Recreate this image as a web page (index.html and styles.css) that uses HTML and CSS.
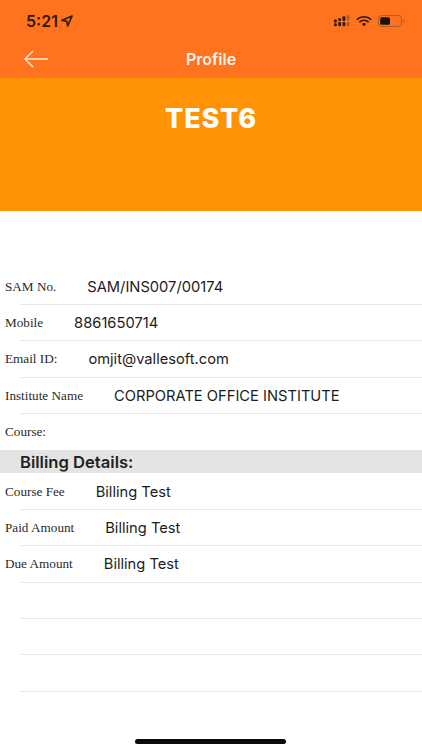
FILE: index.html
```html
<!DOCTYPE html>
<html lang="en">
<head>
<meta charset="utf-8">
<title>Profile</title>
<link rel="stylesheet" href="styles.css">
</head>
<body>
<div class="phone">
  <header class="appbar">
    <div class="status">
      <div class="time"><span>5:21</span>
        <svg class="loc" viewBox="0 0 12 12"><path d="M11 1 1 5.400l4.800 1 .9 4.600z" fill="none" stroke="#3a1d0c" stroke-width="1.700" stroke-linejoin="round"/></svg>
      </div>
      <div class="indicators">
        <svg class="signal" viewBox="0 0 17 12"><g fill="#2e1a0e"><rect x="0" y="4.500" width="3" height="3" rx="1"/><rect x="0" y="8.500" width="3" height="3" rx="1"/><rect x="4.500" y="3" width="3" height="3" rx="1"/><rect x="4.500" y="7" width="3" height="4.500" rx="1"/><rect x="9" y="1" width="3" height="5" rx="1"/><rect x="9" y="7" width="3" height="4.500" rx="1"/></g><g fill="#b4591f"><rect x="13.500" y="0" width="3" height="5.500" rx="1"/><rect x="13.500" y="7" width="3" height="4.500" rx="1"/></g></svg>
        <svg class="wifi" viewBox="0 0 18 12"><g fill="none" stroke="#2e1a0e" stroke-width="1.800"><path d="M1 4.400a11.500 11.500 0 0 1 16 0"/><path d="M3.800 7.200a7.500 7.500 0 0 1 10.400 0"/></g><path d="M6.600 9.400a3.500 3.500 0 0 1 4.800 0L9 11.800z" fill="#2e1a0e"/></svg>
        <svg class="battery" viewBox="0 0 27 12"><rect x=".6" y=".6" width="22.800" height="10.800" rx="3" fill="none" stroke="#a05f33" stroke-width="1"/><rect x="2.200" y="2.200" width="9.800" height="7.600" rx="1.500" fill="#1d120a"/><path d="M25 4.200c1 .3 1.500 1 1.500 1.800s-.5 1.500-1.500 1.800z" fill="#b0683a"/></svg>
      </div>
    </div>
    <nav class="nav">
      <svg class="back" viewBox="0 0 26 18"><path d="M25 9H2M10 1 2 9l8 8" fill="none" stroke="#ffe9d8" stroke-width="1.400"/></svg>
      <h1 class="nav-title">Profile</h1>
    </nav>
  </header>

  <section class="hero"><h2 class="hero-name">TEST6</h2></section>

  <main class="details">
    <div class="row"><span class="label">SAM No.</span><span class="value">SAM/INS007/00174</span></div>
    <div class="row"><span class="label">Mobile</span><span class="value">8861650714</span></div>
    <div class="row"><span class="label">Email ID:</span><span class="value">omjit@vallesoft.com</span></div>
    <div class="row"><span class="label">Institute Name</span><span class="value">CORPORATE OFFICE INSTITUTE</span></div>
    <div class="row row-plain"><span class="label">Course:</span></div>
    <div class="section-title">Billing Details:</div>
    <div class="row"><span class="label">Course Fee</span><span class="value">Billing Test</span></div>
    <div class="row"><span class="label">Paid Amount</span><span class="value">Billing Test</span></div>
    <div class="row"><span class="label">Due Amount</span><span class="value">Billing Test</span></div>
    <div class="row"></div>
    <div class="row"></div>
    <div class="row"></div>
  </main>

  <div class="home-indicator"></div>
</div>
</body>
</html>
```

FILE: styles.css
```css
* { box-sizing: border-box; }

html, body {
  margin: 0;
  padding: 0;
  background: #fff;
}

.phone {
  width: 422px;
  height: 750px;
  position: relative;
  overflow: hidden;
  display: flex;
  flex-direction: column;
  font-family: Inter, "Liberation Sans", Arial, sans-serif;
}

.appbar {
  height: 78px;
  background: #ff731f;
  display: flex;
  flex-direction: column;
}

.status {
  height: 40px;
  padding: 2px 17px 0 26px;
  display: flex;
  align-items: center;
  justify-content: space-between;
}

.time {
  display: flex;
  align-items: center;
  gap: 3px;
  font-size: 16px;
  font-weight: 600;
  color: #33190b;
}

.loc { width: 12px; height: 12px; }

.indicators {
  display: flex;
  align-items: center;
  gap: 6px;
}

.signal { width: 16px; height: 12px; }
.wifi { width: 16px; height: 12px; }
.battery { width: 27px; height: 12px; }

.nav {
  flex: 1;
  position: relative;
  display: flex;
  align-items: center;
  justify-content: center;
  padding-bottom: 1px;
}

.back {
  position: absolute;
  left: 23px;
  top: 10px;
  width: 26px;
  height: 18px;
}

.nav-title {
  margin: 0;
  font-size: 16px;
  font-weight: 600;
  color: #fff1e6;
}

.hero {
  height: 133px;
  background: #ff9305;
  padding-top: 26px;
  text-align: center;
}

.hero-name {
  margin: 0;
  font-size: 27px;
  line-height: 30px;
  letter-spacing: .8px;
  font-weight: 800;
  color: #fff;
}

.details {
  padding-top: 57.500px;
}

.row {
  height: 36.400px;
  display: flex;
  align-items: center;
  gap: 31px;
  padding: 0 0 0 5px;
  position: relative;
}

.row::after {
  content: "";
  position: absolute;
  left: 20px;
  right: 0;
  bottom: 0;
  height: 1px;
  background: #e6e6e6;
}

.row-plain::after { display: none; }

.label {
  font-family: "Liberation Serif", "Times New Roman", serif;
  font-size: 13.200px;
  color: #2a2a2a;
}

.value {
  font-size: 14.700px;
  color: #1c1c1c;
}

.section-title {
  height: 23px;
  padding-left: 20px;
  background: #e4e4e4;
  font-size: 16.600px;
  font-weight: 600;
  line-height: 24px;
  color: #222;
}

.home-indicator {
  position: absolute;
  left: 135px;
  top: 739px;
  width: 151px;
  height: 5px;
  border-radius: 3px;
  background: #0a0a0a;
}
```
